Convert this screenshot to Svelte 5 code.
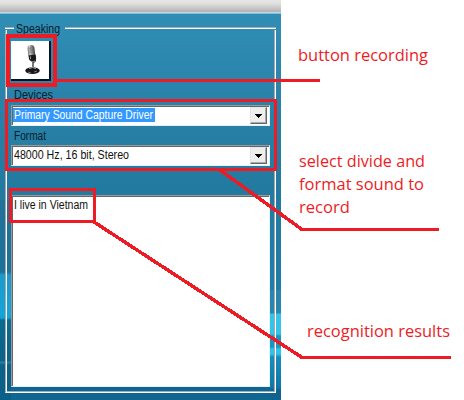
<script>
  const notes = [
    { x: 298, y: 61, w: 130, text: 'button recording' },
    { x: 299, y: 167, w: 126, text: 'select divide and' },
    { x: 299, y: 190, w: 125, text: 'format sound to' },
    { x: 299, y: 213, w: 51, text: 'record' },
    { x: 307, y: 337, w: 143, text: 'recognition results' }
  ];
</script>

{#snippet label(text, w)}
  <svg class="label" width={w + 2} height="16"><text x="0" y="12" textLength={w} lengthAdjust="spacingAndGlyphs">{text}</text></svg>
{/snippet}

{#snippet arrow()}
  <span class="drop"><svg width="7" height="4" shape-rendering="crispEdges"><path d="M0 0h7L4 4H3z" /></svg></span>
{/snippet}

<main>
  <section class="window">
    <div class="titlebar"></div>
    <div class="group">
      <div class="top">
        <i class="rule short"></i>
        <span class="legend">{@render label('Speaking', 44)}</span>
        <i class="rule"></i>
      </div>
      <div class="body">
        <button class="mic" aria-label="Record">
          <svg width="38" height="38" viewBox="0 0 38 38">
            <defs>
              <linearGradient id="metal">
                <stop offset="0" stop-color="#777" /><stop offset=".35" stop-color="#ddd" />
                <stop offset=".6" stop-color="#888" /><stop offset="1" stop-color="#444" />
              </linearGradient>
            </defs>
            <g transform="rotate(-6 21 12)">
              <rect x="17" y="4" width="7" height="13" rx="3.4" fill="url(#metal)" />
              <path d="M18 7h5M18 9h5M18 11h5M20 5v9" stroke="#666" stroke-width=".5" />
              <path d="M17.3 14h7.2v4l-2 2.5h-3l-2-2z" fill="#181818" />
              <path d="M19 15v3" stroke="#999" />
            </g>
            <path d="M22 20v7" stroke="#777" stroke-width="2" />
            <path d="M24.5 15v5l-2 2" stroke="#222" fill="none" />
            <ellipse cx="21.5" cy="29.7" rx="7.2" ry="3.4" fill="#171717" />
            <path d="M18 27.5q4-2 7 0" stroke="#aaa" fill="none" />
            <path d="M17 31l3 1M23 31l3-1" stroke="#777" />
          </svg>
        </button>
        <div class="name first">{@render label('Devices', 39)}</div>
        <div class="combo"><span class="value selected">{@render label('Primary Sound Capture Driver', 139)}</span>{@render arrow()}</div>
        <div class="name">{@render label('Format', 32)}</div>
        <div class="combo"><span class="value">{@render label('48000 Hz, 16 bit, Stereo', 115)}</span>{@render arrow()}</div>
        <div class="result">{@render label('I live in Vietnam', 74)}</div>
      </div>
    </div>
  </section>

  <svg class="callouts" width="464" height="400">
    <g fill="none" stroke="#ed1c24" stroke-width="3" shape-rendering="crispEdges">
      <rect x="8" y="36" width="47" height="49" stroke-width="4" />
      <path d="M57 80.5H320" />
      <rect x="6.5" y="100.5" width="269" height="69" />
      <path d="M301 229.5H439M301 357.5H451" />
      <rect x="10.5" y="189.5" width="84" height="32" />
      <path d="M220 170L302 229.5M94 222L302 357.5" stroke-width="3.5" />
    </g>
    {#each notes as n}
      <text x={n.x} y={n.y} textLength={n.w} lengthAdjust="spacingAndGlyphs">{n.text}</text>
    {/each}
  </svg>
</main>

<style>
  main { position: relative; width: 464px; height: 400px; background: #fff; overflow: hidden; }
  .window {
    box-sizing: border-box; width: 281px; height: 400px; display: flex; flex-direction: column;
    background:
      linear-gradient(#2b86ae 0, #2b86ae 23px, #35c4e8 24px, #35c4e8 44px, #1795c4 46px, #1795c4 57px, #2fc3e9 59px, #2fc3e9 64px, #168ebc 67px, #0e78a7 97px, #10638e 100px, #10638e 110px) 270px 290px / 11px 110px no-repeat,
      linear-gradient(#217299 0, #1c7199 72px, #1c9aca 75px, #15a5d8 115px, #0fa0d4 118px, #0a6b91 120px, #0c6287 161px, #2484a8 162px, #0b6188 165px, #0b608a 200px) 0 200px / 11px 200px no-repeat,
      linear-gradient(#3190b7, #2a83aa 90px, #237aa1 190px, #1d7fa9 320px, #0d6595 387px, #11678f);
  }
  .titlebar { flex: none; height: 14px; background: linear-gradient(#e9e7e5 0, #dedfdd 4px, #b9b5b7 11px, #b9b5b7 12px, #b7d9e8 12px, #b7d9e8 13px, #58a5c4 14px); }
  .group { width: 271px; margin: 7px 0 0 5px; }
  .top { display: flex; height: 16px; align-items: flex-start; }
  .rule { flex: 1; height: 1px; margin-top: 6px; border-bottom: 1px solid #fff; background: #a7a9ac; }
  .rule.short { flex: none; width: 9px; }
  .legend { width: 51px; padding-left: 2px; box-sizing: border-box; }
  .body {
    box-sizing: border-box; height: 363px; margin-top: -7px; padding: 9px 3px 4px 4px;
    border: solid #fff; border-width: 0 1px 1px 0; border-left: 1px solid #a7a9ac;
    box-shadow: inset 1px 0 #fff, inset -1px -1px #a7a9ac;
    display: flex; flex-direction: column; align-items: flex-start;
  }
  .label { display: block; font: 12px "Liberation Sans", sans-serif; fill: currentColor; overflow: visible; }
  .legend, .name { color: #07202b; }
  .mic { box-sizing: border-box; margin: 2px 0 0 1px; width: 40px; height: 40px; padding: 0; border: 0 solid #06141b; border-width: 0 2px 2px 0; background: #fff; flex: none; }
  .mic svg { display: block; }
  .name { padding-left: 4px; height: 17px; margin-top: 2px; }
  .name.first { height: 18px; margin-top: 6px; }
  .combo, .result { box-sizing: border-box; width: 259px; margin-left: 1px; background: #fff; border: 1px solid; border-color: #9a9a9a #e4f2f4 #e4f2f4 #9a9a9a; box-shadow: inset 1px 1px #666; }
  .combo { height: 21px; display: flex; justify-content: space-between; padding: 1px 2px 1px 1px; flex: none; }
  .value { height: 14px; margin-top: 1px; padding-left: 1px; color: #111; }
  .value .label { margin-top: -1px; }
  .selected { background: #3399ff; color: #fff; }
  .drop { box-sizing: border-box; width: 17px; height: 17px; display: flex; align-items: center; justify-content: center; background: #eeeeec; border: 1px solid; border-color: #e4e4e4 #666 #666 #e4e4e4; box-shadow: inset -1px -1px #aaa; }
  .result { height: 192px; margin-top: 29px; padding: 1px 2px; color: #111; flex: none; }
  .callouts { position: absolute; inset: 0; }
  .callouts text { font: 17px "Open Sans", sans-serif; font-variant-ligatures: none; fill: #ed1c24; }
</style>
